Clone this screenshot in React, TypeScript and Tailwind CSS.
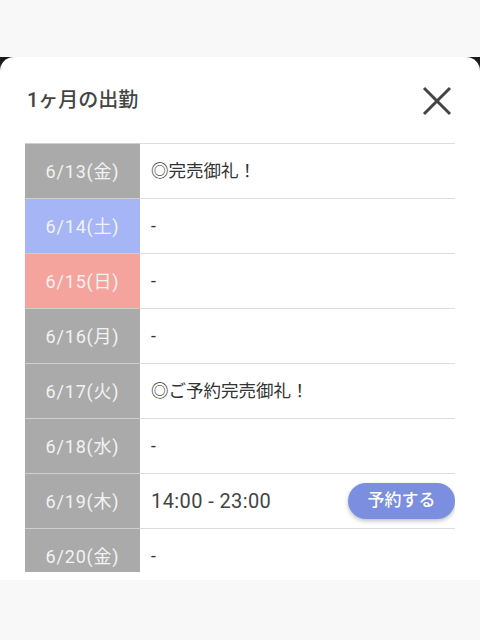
import React from 'react';

type Day = {
  date: string;
  kind: 'normal' | 'sat' | 'sun';
  note: string;
  reservable?: boolean;
};

const days: Day[] = [
  { date: '6/13(金)', kind: 'normal', note: '◎完売御礼！' },
  { date: '6/14(土)', kind: 'sat', note: '-' },
  { date: '6/15(日)', kind: 'sun', note: '-' },
  { date: '6/16(月)', kind: 'normal', note: '-' },
  { date: '6/17(火)', kind: 'normal', note: '◎ご予約完売御礼！' },
  { date: '6/18(水)', kind: 'normal', note: '-' },
  { date: '6/19(木)', kind: 'normal', note: '14:00 - 23:00', reservable: true },
  { date: '6/20(金)', kind: 'normal', note: '-' },
];

const cellColor = {
  normal: 'bg-[#aaaaaa]',
  sat: 'bg-[#a5b5f5]',
  sun: 'bg-[#f5a39d]',
};

const App: React.FC = () => {
  return (
    <div
      className="w-[480px] h-[640px] bg-[#f8f8f8] flex flex-col"
      style={{ fontFamily: 'Roboto, "Noto Sans CJK JP", sans-serif' }}
    >
      <div className="h-[57px] shrink-0" />
      <div className="bg-[#1a1a1a] h-[523px] shrink-0">
        <div className="bg-white rounded-t-[14px] h-full flex flex-col">
          <div className="h-[86px] shrink-0 flex items-center justify-between pl-[27px] pr-[28px]">
            <h2 className="text-[20px] font-medium text-[#444]">1ヶ月の出勤</h2>
            <svg width="30" height="30" viewBox="0 0 30 30" className="mt-[2px]">
              <path d="M2 2 L28 28 M28 2 L2 28" stroke="#444" strokeWidth="3" strokeLinecap="butt" />
            </svg>
          </div>
          <div className="mx-[25px] mb-[8px] flex-1 overflow-hidden">
            {days.map((d) => (
              <div key={d.date} className="flex h-[55px]">
                <div
                  className={`w-[115px] shrink-0 flex items-center justify-center text-[18px] tracking-[0.8px] text-[#f2f2f2] border-t border-[#cfcfcf] ${cellColor[d.kind]}`}
                >
                  {d.date}
                </div>
                <div className="flex-1 flex items-center justify-between pl-[11px] border-t border-[#dddddd] text-[17.5px] text-[#333]">
                  <span className={d.reservable ? 'text-[20px] tracking-[0.4px] text-[#444]' : ''}>{d.note}</span>
                  {d.reservable && (
                    <button className="w-[107px] h-[36px] rounded-full bg-[#7b8ee0] text-white text-[17px] font-medium shadow-[0_2px_4px_rgba(0,0,0,0.25)]">
                      予約する
                    </button>
                  )}
                </div>
              </div>
            ))}
          </div>
        </div>
      </div>
    </div>
  );
};

export default App;
